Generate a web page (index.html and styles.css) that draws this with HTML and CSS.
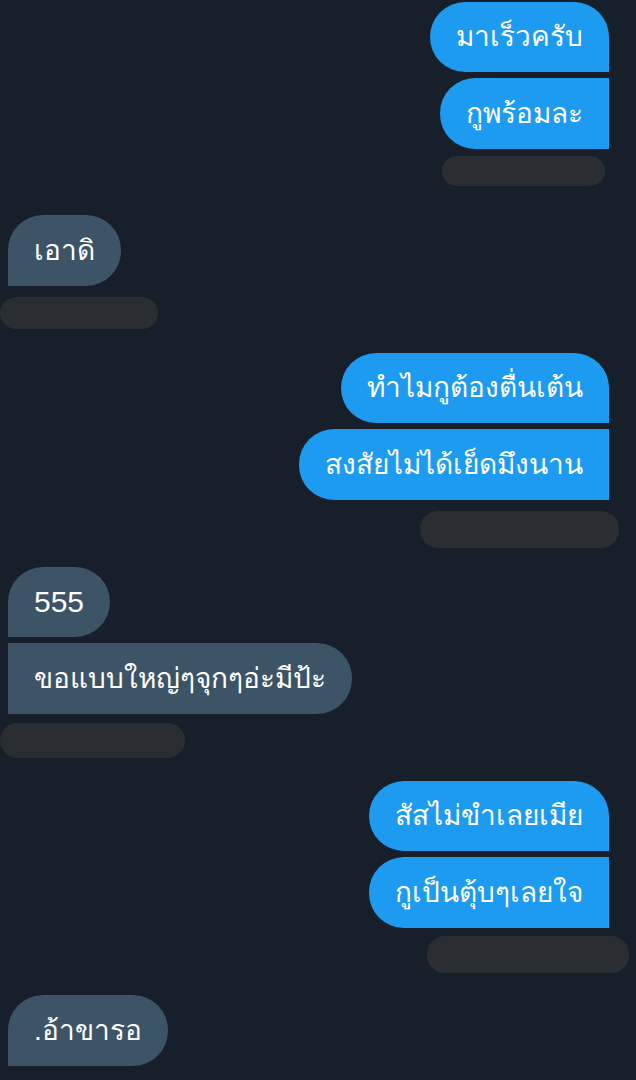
FILE: index.html
```html
<!DOCTYPE html>
<html lang="th">
<head>
<meta charset="utf-8">
<link rel="stylesheet" href="styles.css">
</head>
<body>
<div class="chat">
  <div class="group sent g1">
    <div class="bubble first">มาเร็วครับ</div>
    <div class="bubble last">กูพร้อมละ</div>
    <div class="meta m1"></div>
  </div>
  <div class="group recv g2">
    <div class="bubble single">เอาดิ</div>
    <div class="meta m2"></div>
  </div>
  <div class="group sent g3">
    <div class="bubble first">ทำไมกูต้องตื่นเต้น</div>
    <div class="bubble last">สงสัยไม่ได้เย็ดมึงนาน</div>
    <div class="meta m3"></div>
  </div>
  <div class="group recv g4">
    <div class="bubble first num">555</div>
    <div class="bubble last">ขอแบบใหญ่ๆจุกๆอ่ะมีป้ะ</div>
    <div class="meta m4"></div>
  </div>
  <div class="group sent g5">
    <div class="bubble first">สัสไม่ขำเลยเมีย</div>
    <div class="bubble last">กูเป็นตุ้บๆเลยใจ</div>
    <div class="meta m5"></div>
  </div>
  <div class="group recv g6">
    <div class="bubble single">.อ้าขารอ</div>
  </div>
</div>
</body>
</html>
```
FILE: styles.css
```css
html, body {
  margin: 0;
  padding: 0;
  background: #17202a;
  height: 1080px;
  overflow: hidden;
}
.chat {
  display: flex;
  flex-direction: column;
  font-family: "Liberation Sans", "Noto Sans", "DejaVu Sans", sans-serif;
  color: #ffffff;
  padding-top: 2px;
}
.group {
  display: flex;
  flex-direction: column;
  gap: 6px;
}
.sent { align-items: flex-end; padding-right: 27px; }
.recv { align-items: flex-start; padding-left: 8px; }
.bubble {
  height: 70px;
  line-height: 70px;
  font-size: 28px;
  padding: 0 26px;
  white-space: nowrap;
  box-sizing: border-box;
}
.bubble.last, .bubble.single { height: 71px; line-height: 71px; }
.bubble.num { font-size: 30px; }
.sent .bubble { background: #1d9bf0; }
.recv .bubble { background: #3d5466; }
.sent .first { border-radius: 35px 35px 0 35px; }
.sent .last { border-radius: 35px 0 0 35px; }
.recv .single, .recv .first { border-radius: 35px 35px 35px 0; }
.recv .last { border-radius: 0 35px 35px 0; }
.meta {
  background: #2a2d31;
  border-radius: 16px;
}
.m1 { width: 163px; height: 30px; margin-top: 1px; margin-right: 4px; }
.m2 { width: 158px; height: 32px; margin-top: 5px; margin-left: -8px; }
.m3 { width: 199px; height: 37px; margin-top: 5px; margin-right: -10px; border-radius: 18px; }
.m4 { width: 185px; height: 35px; margin-top: 3px; margin-left: -8px; border-radius: 18px; }
.m5 { width: 202px; height: 37px; margin-top: 2px; margin-right: -20px; border-radius: 18px; }
.g2 { margin-top: 29px; }
.g3 { margin-top: 24px; }
.g4 { margin-top: 19px; }
.g5 { margin-top: 23px; }
.g6 { margin-top: 22px; }
```
